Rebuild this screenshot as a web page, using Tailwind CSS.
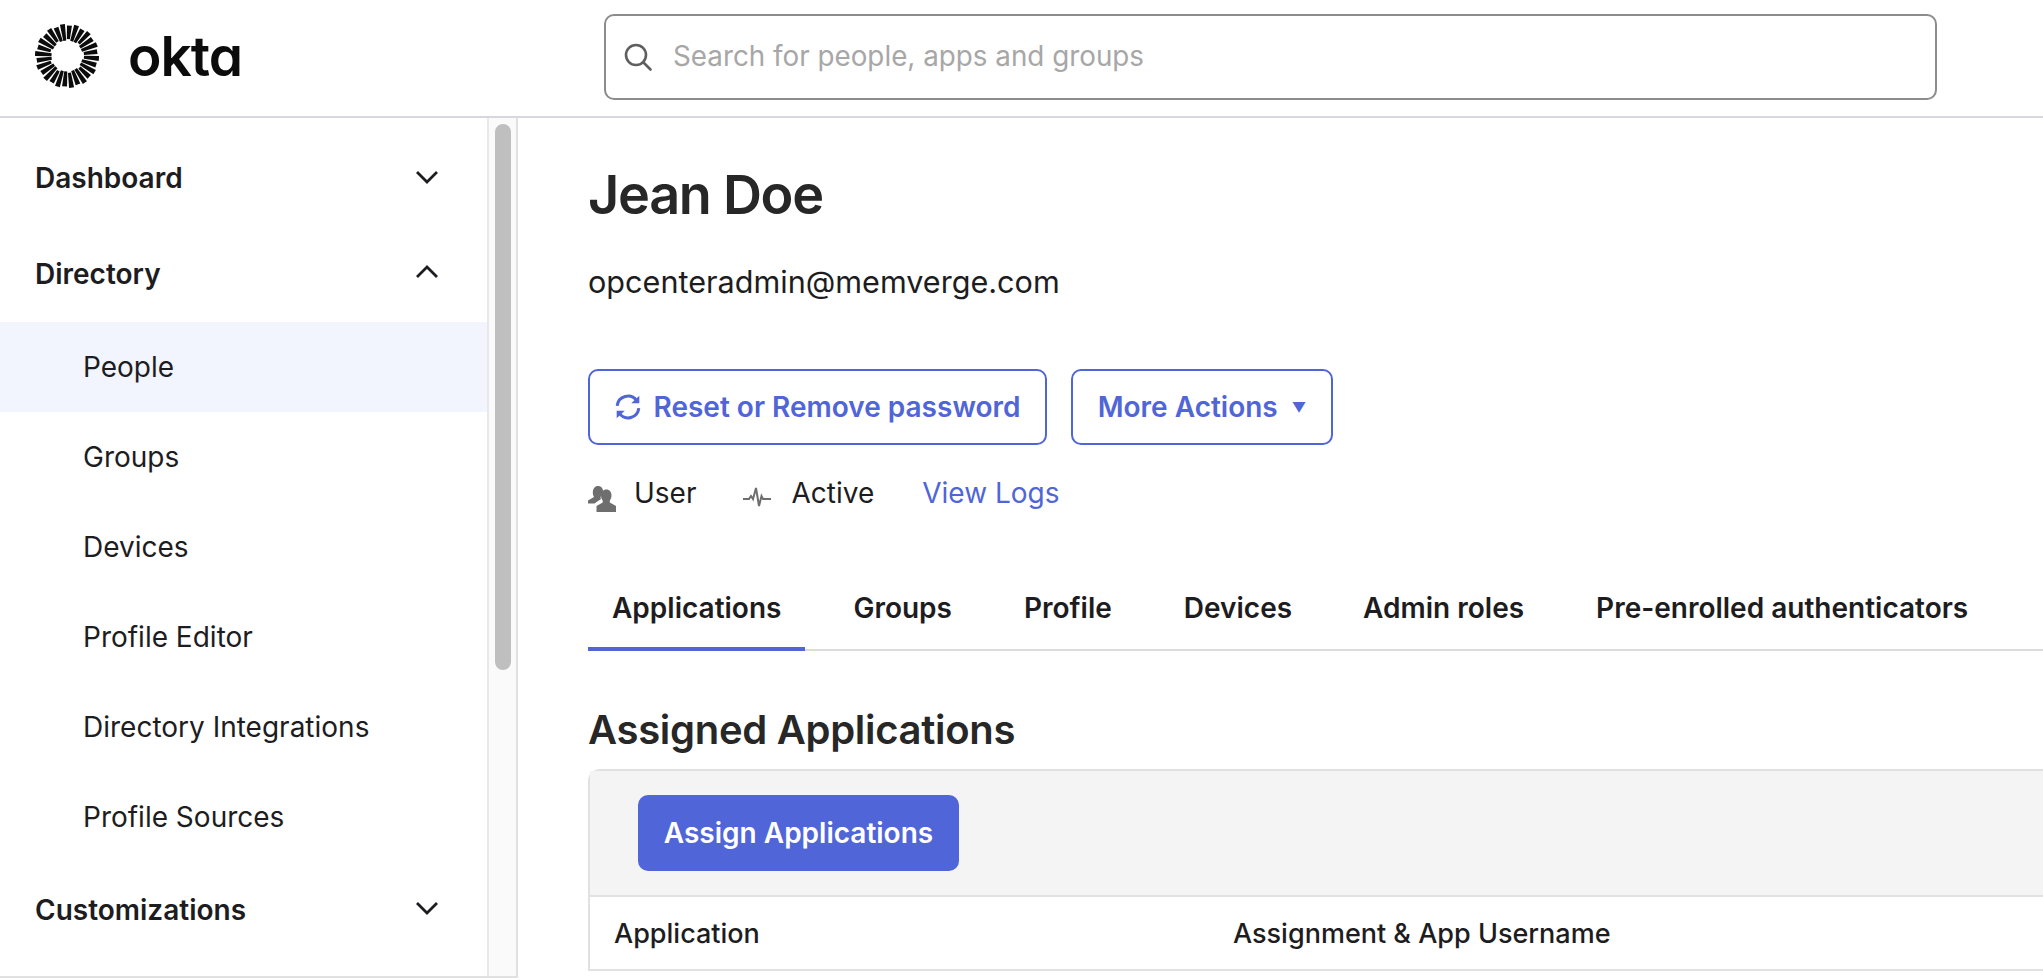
<!DOCTYPE html>
<html lang="en">
<head>
    <meta charset="UTF-8">
    <title>Okta - Jean Doe</title>
    <script src="https://cdn.jsdelivr.net/npm/@tailwindcss/browser@4"></script>
</head>
<body class="h-[980px] overflow-hidden bg-white font-['Inter',sans-serif] text-[#1d1d21]">
    <header class="flex h-[118px] items-center border-b-2 border-[#d7d7dc] pb-[3px]">
        <div class="flex w-[604px] items-center pl-[35px]">
            <svg id="sun" width="64" height="64" viewBox="-32 -32 64 64" class="-mt-[1px] shrink-0"></svg>
            <span class="ml-[29px] text-[55px] leading-none font-semibold tracking-[-1px] text-[#0c0c0c] [font-feature-settings:'cv11']">okta</span>
        </div>
        <div class="flex h-[86px] w-[1333px] items-center rounded-[10px] border-2 border-[#8c8c8c] pl-[17px]">
            <svg width="30" height="30" viewBox="0 0 30 30" fill="none" stroke="#5f5f5f" stroke-width="2.6" stroke-linecap="round"><circle cx="13" cy="13" r="10"/><path d="M20.5 20.5l7 7"/></svg>
            <span class="ml-[20px] text-[27.8px] text-[#a7a7a7]">Search for people, apps and groups</span>
        </div>
    </header>

    <div class="flex h-[862px]">
        <aside class="flex h-[860px] w-[518px] shrink-0 border-r-2 border-b-2 border-[#e1e1e1]">
            <nav class="w-[487px] shrink-0 pt-[12px]">
                <div class="flex h-[95px] items-center justify-between pr-[48px] pl-[35px] text-[28px] font-semibold">
                    Dashboard
                    <svg width="24" height="14" viewBox="0 0 24 14" class="-mt-[2px]" fill="none" stroke="#1d1d21" stroke-width="2.800"><path d="M2 2l10 10L22 2"/></svg>
                </div>
                <div class="flex h-[97px] items-center justify-between pr-[48px] pl-[35px] text-[28px] font-semibold">
                    Directory
                    <svg width="24" height="14" viewBox="0 0 24 14" class="-mt-[3px]" fill="none" stroke="#1d1d21" stroke-width="2.800"><path d="M2 12L12 2l10 10"/></svg>
                </div>
                <a class="flex h-[90px] items-center bg-[#f2f5fd] pl-[83px] text-[28px]">People</a>
                <a class="flex h-[90px] items-center pl-[83px] text-[28px]">Groups</a>
                <a class="flex h-[90px] items-center pl-[83px] text-[28px]">Devices</a>
                <a class="flex h-[90px] items-center pl-[83px] text-[28px]">Profile Editor</a>
                <a class="flex h-[90px] items-center pl-[83px] text-[28px]">Directory Integrations</a>
                <a class="flex h-[90px] items-center pl-[83px] text-[28px]">Profile Sources</a>
                <div class="flex h-[95px] items-center justify-between pr-[48px] pl-[35px] text-[28px] font-semibold">
                    Customizations
                    <svg width="24" height="14" viewBox="0 0 24 14" class="-mt-[3px]" fill="none" stroke="#1d1d21" stroke-width="2.800"><path d="M2 2l10 10L22 2"/></svg>
                </div>
            </nav>
            <div class="flex-1 border-l-2 border-[#e8e8e8] bg-[#fafafa] pt-[6px] pl-[6px]">
                <div class="h-[546px] w-[16px] rounded-full bg-[#bfbfbf]"></div>
            </div>
        </aside>

        <main class="min-w-0 flex-1 pt-[43px] pl-[70px]">
            <h1 class="text-[54px] leading-[68px] font-semibold tracking-[-1.3px] text-[#272727]">Jean Doe</h1>
            <p class="mt-[34px] text-[30.6px] leading-[38px]">opcenteradmin@memverge.com</p>

            <div class="mt-[68px] flex gap-[24px]">
                <button class="flex h-[76px] w-[459px] items-center justify-center gap-[12px] rounded-[10px] border-2 border-[#5065d8] text-[28px] font-semibold text-[#5065d8]">
                    <svg width="28" height="28" viewBox="0 0 26 26" class="-ml-[1px]" fill="none" stroke="#5065d8" stroke-width="2.800"><path d="M3 12a10 10 0 0 1 18-5M23 14a10 10 0 0 1-18 5"/><path d="M16 9.500h7.500V2.500z" fill="#5065d8" stroke="none"/><path d="M10 16.500H2.500v7z" fill="#5065d8" stroke="none"/></svg>
                    Reset or Remove password
                </button>
                <button class="flex h-[76px] w-[262px] items-center justify-center gap-[14px] rounded-[10px] border-2 border-[#5065d8] text-[28px] font-semibold text-[#5065d8]">
                    More Actions
                    <span class="text-[14px]">▼</span>
                </button>
            </div>

            <div class="mt-[28px] flex h-[40px] items-center text-[28px]">
                <svg width="28" height="26" viewBox="0 0 28 26" class="mt-[12px]" fill="#6e6e6e"><path d="M10 0c3 0 5 2.200 5 5 0 .7-.1 1.300-.3 2-1.700 1.700-2.400 3.800-1.900 6.300l-2.800 1.800-3.500 2.400H0v-3l6-3.500c-.8-1.200-1.200-2.600-1.200-4C4.800 2.200 7 0 10 0z"/><path d="M18.500 3.500c3 0 5 2.400 5 6 0 2.200-.7 3.800-1.700 5v2L28 20v6H8.500v-6l6.200-3.500v-2c-1-1.200-1.700-2.800-1.700-5 0-3.600 2-6 5.500-6z"/></svg>
                <span class="ml-[18px]">User</span>
                <svg width="28" height="22" viewBox="0 0 28 22" class="mt-[8px] ml-[47px]" fill="none" stroke="#6e6e6e" stroke-width="2"><path d="M0 13h6l2-3 2 3 3-11 3 18 2.500-10 1.500 3H28"/></svg>
                <span class="ml-[20px]">Active</span>
                <a class="ml-[48px] text-[#5065d8]">View Logs</a>
            </div>

            <div class="mt-[44px] flex h-[94px] items-stretch border-b-2 border-[#dcdcdc] text-[28px] font-semibold">
                <a class="-mb-[2px] flex items-center border-b-4 border-[#5065d8] px-[24px] pt-[12px]">Applications</a>
                <a class="ml-[24px] flex items-center px-[24px] pt-[10px]">Groups</a>
                <a class="ml-[24px] flex items-center px-[24px] pt-[10px]">Profile</a>
                <a class="ml-[24px] flex items-center px-[24px] pt-[10px]">Devices</a>
                <a class="ml-[23px] flex items-center px-[24px] pt-[10px]">Admin roles</a>
                <a class="ml-[24px] flex items-center px-[24px] pt-[10px]">Pre-enrolled authenticators</a>
            </div>

            <h2 class="mt-[54px] text-[40px] leading-[50px] font-semibold tracking-[-0.3px] text-[#272727]">Assigned Applications</h2>

            <div class="mt-[14px] rounded-tl-[12px] border-t-2 border-l-2 border-[#e1e1e1]">
                <div class="flex h-[126px] items-center border-b-2 border-[#e1e1e1] bg-[#f4f4f4] pl-[48px]">
                    <button class="h-[76px] w-[321px] rounded-[10px] bg-[#5065d8] text-[28px] font-semibold text-white">Assign Applications</button>
                </div>
                <div class="flex h-[74px] items-center border-b-2 border-[#e1e1e1] pt-[2px] pl-[24px] text-[27px] font-medium">
                    <span class="w-[619px]">Application</span>
                    <span>Assignment &amp; App Username</span>
                </div>
            </div>
        </main>
    </div>

    <script>
        // sunburst logo: tapered rays around a ring
        const sun = document.getElementById('sun');
        const rays = 28;
        for (let i = 0; i < rays; i++) {
            const a = (i / rays) * Math.PI * 2 + 0.08;
            const inner = 15.5 + (i % 3 === 0 ? 1.5 : 0);
            const outer = 32 - (i % 2) * 1.5;
            const c = Math.cos(a), s = Math.sin(a);
            const pts = [[inner, -1.5], [outer, -2.5], [outer, 2.5], [inner, 1.5]]
                .map(([r, w]) => (c * r - s * w) + ',' + (s * r + c * w)).join(' ');
            const ray = document.createElementNS('http://www.w3.org/2000/svg', 'polygon');
            ray.setAttribute('points', pts);
            ray.setAttribute('fill', '#0c0c0c');
            sun.appendChild(ray);
        }
    </script>
</body>
</html>
